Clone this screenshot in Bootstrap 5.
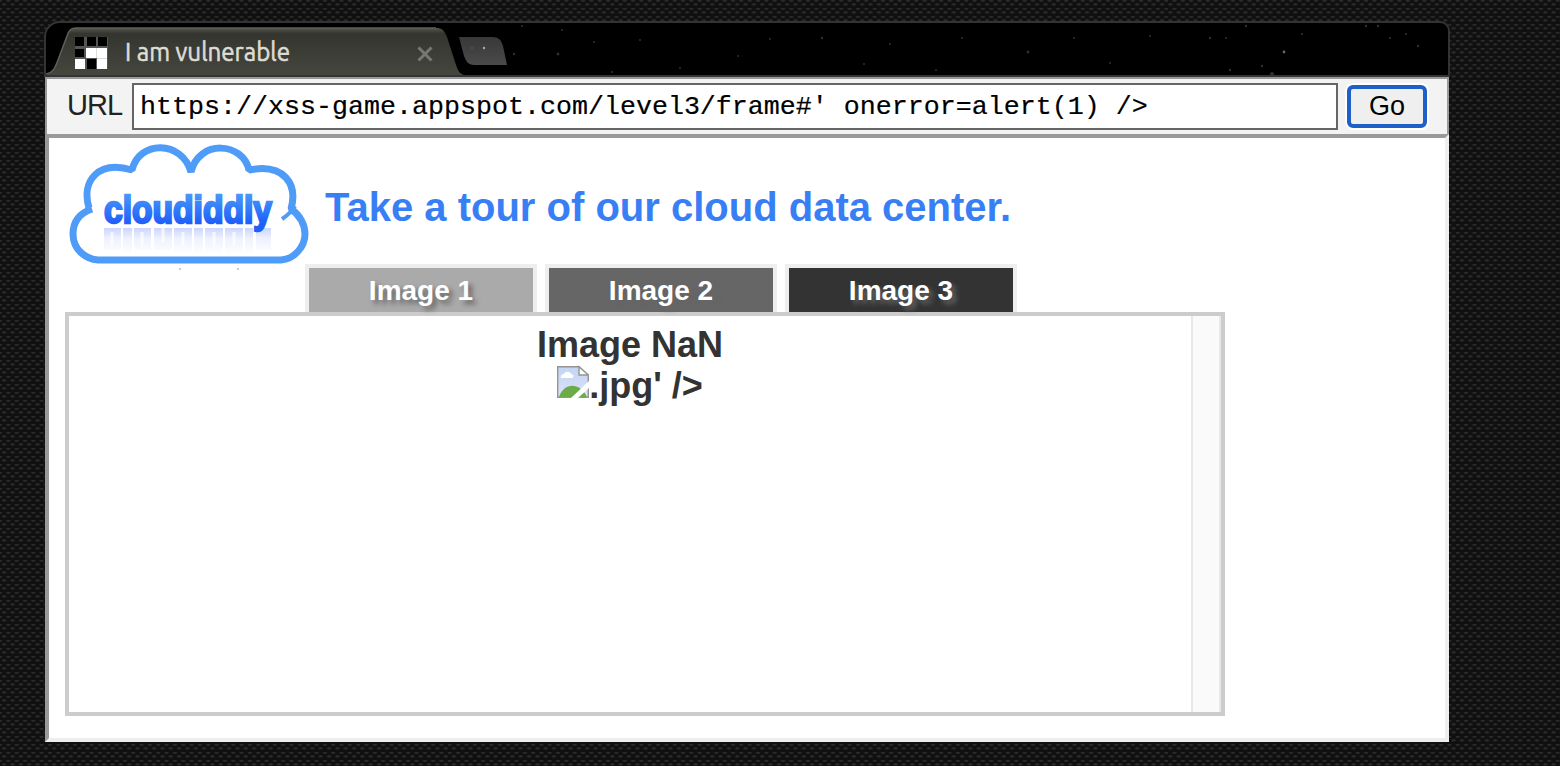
<!DOCTYPE html>
<html lang="en">
<head>
  <meta charset="UTF-8">
  <title>I am vulnerable</title>

  <!-- Bootstrap CSS -->
  <link href="https://cdn.jsdelivr.net/npm/bootstrap@5.3.0/dist/css/bootstrap.min.css" rel="stylesheet">

  <style>
    body {
      height: 766px;
      overflow: hidden;
      padding: 21px 110px 0 44px;
      background-color: #101010;
      font-family: "Liberation Sans", Arial, sans-serif;
    }
    .weave {
      inset: 0;
      z-index: -1;
    }
    .tab-strip {
      height: 56px;
      background: #000;
      border: 2px solid #333;
      border-radius: 16px 10px 0 0;
      overflow: hidden;
    }
    .tab-strip svg {
      font-family: Ubuntu, "Open Sans", sans-serif;
    }
    .url-bar {
      height: 57px;
      margin: 0 1px;
      padding: 4px 20px 4px 20px;
      background: #f3f3f3;
      border: 2px solid #999;
      border-bottom: 0;
    }
    .url-label {
      width: 65px;
      font-size: 29px;
      line-height: 45px;
      letter-spacing: -1px;
      color: #222;
    }
    .url-input {
      width: 1206px;
      height: 47px;
      padding: 0 6px;
      border: 2px solid #666;
      border-radius: 0;
      background: #fff;
      color: #000;
      font: 26.67px "Liberation Mono", "Courier New", monospace;
      -webkit-text-stroke: .2px #000;
    }
    .go-btn {
      width: 80px;
      height: 43px;
      margin: 2px 0 0 9px;
      padding: 0;
      border: 4px solid #1f60c8;
      border-radius: 6px;
      box-shadow: 0 0 0 2px #fff;
      background: #efefef;
      color: #000;
      font-size: 27px;
      line-height: 34px;
    }
    .go-btn span {
      display: block;
      height: 35px;
    }
    .page-frame {
      height: 608px;
      margin: 0 1px;
      padding: 0 16px;
      background: #fff;
      border: 4px solid;
      border-color: #999 #eee #eee #999;
    }
    .site-head {
      height: 126px;
    }
    .tagline {
      margin: 46px 0 0 16px;
      font-size: 40px;
      line-height: 46px;
      font-weight: bold;
      color: #387ff5;
      white-space: nowrap;
    }
    .image-tabs {
      gap: 8px;
      margin-left: 240px;
    }
    .image-tab {
      width: 232px;
      height: 48px;
      border: 4px solid #eee;
      border-bottom: 0;
      color: #fff;
      font-size: 28px;
      line-height: 45px;
      font-weight: bold;
      text-align: center;
      text-shadow: 4px 4px 5px #666;
    }
    .shade-1 { background: #aaa; }
    .shade-2 { background: #666; }
    .shade-3 { background: #333; }
    .viewer {
      width: 1160px;
      height: 404px;
      border: 4px solid #ccc;
      color: #333;
      font-size: 36px;
      line-height: 41px;
      font-weight: bold;
    }
    .viewer-body {
      padding-top: 8px;
    }
    .scroll-track {
      width: 30px;
      background: #fafafa;
      border: solid #e8e8e8;
      border-width: 0 2px;
    }
  </style>
</head>
<body>

  <svg class="weave position-absolute" width="1560" height="766">
    <defs>
      <pattern id="weave" width="8.33" height="8" patternUnits="userSpaceOnUse">
        <rect x="2.2" y="3.2" width="4" height="2.4" rx="1" fill="#2b2b2b"/>
        <rect x="-2" y="0" width="4" height="1.8" rx=".8" fill="#2b2b2b"/>
        <rect x="6.3" y="0" width="4" height="1.8" rx=".8" fill="#2b2b2b"/>
      </pattern>
    </defs>
    <rect width="1560" height="766" fill="url(#weave)"/>
  </svg>

  <!-- Browser tab strip -->
  <div class="tab-strip">
    <svg class="d-block" width="1402" height="52" viewBox="46 23 1402 52">
      <defs>
        <linearGradient id="tabFill" x1="0" y1="0" x2="0" y2="1">
          <stop offset="0" stop-color="#55564d"/>
          <stop offset=".12" stop-color="#34352e"/>
          <stop offset="1" stop-color="#45463e"/>
        </linearGradient>
        <linearGradient id="newTabFill" x1="0" y1="0" x2="0" y2="1">
          <stop offset="0" stop-color="#383838"/>
          <stop offset="1" stop-color="#4a4a4a"/>
        </linearGradient>
      </defs>
      <path d="M46 75C53 73 55 68 58 60L67 36C69 30 71 28 76 28H436C442 28 444 30 447 37L456 65C458 71 460 74 464 75Z" fill="url(#tabFill)"/>
      <path d="M46 74C53 73 55 68 58 60L67 36C69 30 71 28 76 28H436" fill="none" stroke="#5f6057" stroke-width="1.5"/>
      <rect x="75" y="37" width="33" height="32" fill="#555"/>
      <path d="M75 37h9v9h-9zM87 37h9v9h-9zM98 37h9v9h-9zM75 49h9v8h-9zM87 59h9v10h-9z" fill="#000"/>
      <path d="M96 48h1v10h-1zM97 58h10v1h-10z" fill="#ddd"/>
      <path d="M86 48h10v10h-10zM97 48h10v10h-10zM75 59h10v10h-10zM97 59h10v10h-10z" fill="#fff"/>
      <text x="125" y="61" font-size="26" fill="#dddcd5" stroke="#dddcd5" stroke-width=".6" textLength="165" lengthAdjust="spacingAndGlyphs">I am vulnerable</text>
      <path d="M418.500 47.500L431.500 60.500M431.500 47.500L418.500 60.500" stroke="#77786f" stroke-width="3"/>
      <path d="M459 37H492C499 37 501 40 503 46L507 65H474C468 65 466 61 464 56Z" fill="url(#newTabFill)"/>
      <g fill="#303030">
        <circle cx="484" cy="48" r="1.2" fill="#aaa"/>
        <circle cx="472" cy="48" r="1" fill="#555"/>
        <circle cx="514" cy="54" r="1.2"/>
        <circle cx="522" cy="26" r="1"/>
        <circle cx="558" cy="54" r="1.4"/>
        <circle cx="594" cy="42" r="1"/>
        <circle cx="562" cy="30" r="1"/>
        <circle cx="612" cy="72" r="1"/>
        <circle cx="640" cy="40" r="1"/>
        <circle cx="680" cy="68" r="1"/>
        <circle cx="738" cy="56" r="1"/>
        <circle cx="770" cy="39" r="1"/>
        <circle cx="822" cy="38" r="1.2"/>
        <circle cx="864" cy="64" r="1"/>
        <circle cx="890" cy="44" r="1"/>
        <circle cx="936" cy="70" r="1"/>
        <circle cx="962" cy="38" r="1"/>
        <circle cx="1028" cy="52" r="1.4"/>
        <circle cx="1074" cy="38" r="1"/>
        <circle cx="1110" cy="63" r="1"/>
        <circle cx="1150" cy="36" r="1"/>
        <circle cx="1210" cy="38" r="1.2"/>
        <circle cx="1226" cy="38" r="1"/>
        <circle cx="1246" cy="26" r="1.2"/>
        <circle cx="1284" cy="52" r="1.4" fill="#666"/>
        <circle cx="1230" cy="70" r="1.2"/>
        <circle cx="1262" cy="66" r="1.2"/>
        <circle cx="1272" cy="74" r="2"/>
        <circle cx="1302" cy="34" r="1.1"/>
        <circle cx="1366" cy="26" r="1.2"/>
        <circle cx="1378" cy="26" r="1.2"/>
        <circle cx="1390" cy="38" r="1.1"/>
        <circle cx="1406" cy="34" r="1.1"/>
        <circle cx="1418" cy="46" r="1.2"/>
      </g>
    </svg>
  </div>

  <div class="url-bar d-flex align-items-start">
    <label for="url" class="url-label">URL</label>
    <input id="url" class="url-input" type="text" value="https://xss-game.appspot.com/level3/frame#' onerror=alert(1) />">
    <button class="btn go-btn"><span>Go</span></button>
  </div>

  <div class="page-frame">
    <div class="site-head d-flex">
      <svg class="flex-shrink-0" width="244" height="134" viewBox="65 138 244 134">
        <defs>
          <linearGradient id="logoFill" x1="0" y1="0" x2="0" y2="1">
            <stop offset=".1" stop-color="#4a9af8"/>
            <stop offset=".8" stop-color="#2060fa"/>
          </linearGradient>
          <linearGradient id="mirrorFill" x1="0" y1="0" x2="0" y2="1">
            <stop offset="0" stop-color="#ccd5fc"/>
            <stop offset=".4" stop-color="#eef1fe"/>
            <stop offset="1" stop-color="#fff"/>
          </linearGradient>
        </defs>
        <path d="M92 209C77 214 73 224 73 234C73 250 86 259 98 260H281C294 259 305 247 305 234C305 225 300 215 291 209C298 184 284 163 249 170C243 142 199 139 191 172C182 140 139 140 132 170C98 160 81 181 89 208" fill="#fff" stroke="#4e9bf8" stroke-width="7" stroke-linejoin="bevel"/>
        <path d="M295 206C292 211 288 215 282 219" fill="none" stroke="#4e9bf8" stroke-width="4"/>
        <!-- Faded reflection under the wordmark -->
        <path d="M104 228h17v22h-17zM123 228h9v26h-9zM134 228h17v22h-17zM154 228h18v22h-18zM174 228h18v26h-18zM194 228h9v26h-9zM205 228h18v26h-18zM225 228h18v26h-18zM245 228h8v26h-8zM256 228h15v22h-15z" fill="url(#mirrorFill)"/>
        <path d="M112 232v14M142 232v14M163 228v14M183 232v14M214 232v14M234 232v14" stroke="#fff" stroke-opacity=".7" stroke-width="3"/>
        <text x="104" y="223" font-family="'Liberation Sans Narrow', 'Liberation Sans', sans-serif" font-weight="900" font-size="38" textLength="168" lengthAdjust="spacingAndGlyphs" fill="url(#logoFill)" stroke="url(#logoFill)" stroke-width="2.4">cloudiddly</text>
        <path d="M179 268h2v2h-2zM237 268h2v2h-2z" fill="#ccc"/>
      </svg>
      <h1 class="tagline">Take a tour of our cloud data center.</h1>
    </div>

    <div class="image-tabs d-flex">
      <div class="image-tab shade-1">Image 1</div>
      <div class="image-tab shade-2">Image 2</div>
      <div class="image-tab shade-3">Image 3</div>
    </div>

    <div class="viewer d-flex">
      <div class="viewer-body flex-grow-1 text-center">
        <div>Image NaN</div>
        <div class="d-flex justify-content-center">
          <svg width="32" height="33" viewBox="0 -1 32 33">
            <defs>
              <linearGradient id="skyFill" x1="0" y1="0" x2="0" y2="1">
                <stop offset="0" stop-color="#c3d4f3"/>
                <stop offset="1" stop-color="#dbe3f8"/>
              </linearGradient>
            </defs>
            <path d="M.7.7H22L31.3 9V31.3H.7Z" fill="url(#skyFill)" stroke="#959595" stroke-width="1.4"/>
            <path d="M4 12C3 9 6 8 7 8C8 5 13 5 14 8C17 8 17 12 15 12Z" fill="#fff"/>
            <path d="M2 31C7 16 23 16 30 31Z" fill="#6cab4a"/>
            <path d="M22 .7V9H31.3Z" fill="#fff" stroke="#959595" stroke-width="1.4"/>
            <path d="M14 32L32 15V22L21 32Z" fill="#fff"/>
          </svg>
          <span>.jpg' /&gt;</span>
        </div>
      </div>
      <div class="scroll-track"></div>
    </div>
  </div>

  <script src="https://cdn.jsdelivr.net/npm/bootstrap@5.3.0/dist/js/bootstrap.bundle.min.js"></script>
</body>
</html>
